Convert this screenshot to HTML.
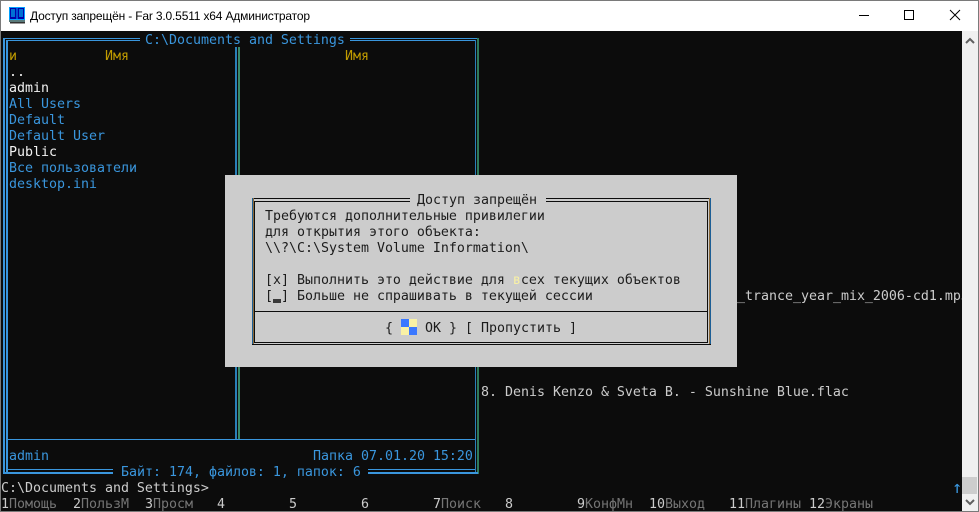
<!DOCTYPE html>
<html><head><meta charset="utf-8">
<style>
html,body{margin:0;padding:0;background:#0c0c0c}
#w{position:relative;width:979px;height:512px;overflow:hidden;background:#0c0c0c;font-family:"DejaVu Sans Mono","Liberation Mono",monospace;font-size:13.29px;line-height:16px}
.t{position:absolute;white-space:pre;height:16px;margin-top:2px}
.r{position:absolute}
.b{color:#3a96dd}.w{color:#f2f2f2}.y{color:#c19c00}.g{color:#cccccc}.d{color:#767676}
.k{color:#1c1c1c}
</style></head><body><div id="w">
<!-- panel frames -->
<div class="r" style="left:3px;top:38px;width:137px;height:1px;background:#3a96dd"></div>
<div class="r" style="left:6px;top:40px;width:134px;height:1px;background:#3a96dd"></div>
<div class="r" style="left:350px;top:38px;width:127px;height:1px;background:#3a96dd"></div>
<div class="r" style="left:350px;top:40px;width:125px;height:1px;background:#3a96dd"></div>
<div class="r" style="left:3px;top:38px;width:2px;height:436px;background:#3a96dd"></div>
<div class="r" style="left:6px;top:40px;width:2px;height:432px;background:#3a96dd"></div>
<div class="r" style="left:235px;top:47px;width:2px;height:392px;background:#2a7fb8"></div>
<div class="r" style="left:238px;top:47px;width:2px;height:392px;background:#3a8a6a"></div>
<div class="r" style="left:475px;top:40px;width:1px;height:432px;background:#2a7fb8"></div>
<div class="r" style="left:477px;top:38px;width:2px;height:436px;background:#2f7a5a"></div>
<div class="r" style="left:6px;top:439px;width:469px;height:1px;background:#3a96dd"></div>
<div class="r" style="left:3px;top:472px;width:110px;height:2px;background:#3a96dd"></div>
<div class="r" style="left:368px;top:469px;width:107px;height:1px;background:#3a96dd"></div>
<div class="r" style="left:368px;top:472px;width:110px;height:2px;background:#3a96dd"></div>
<div class="r" style="left:6px;top:469px;width:107px;height:1px;background:#3a96dd"></div>
<!-- panel text -->
<div class="t b" style="left:145px;top:31px">C:\Documents and Settings</div>
<div class="t y" style="left:9px;top:47px">и</div>
<div class="t y" style="left:105px;top:47px">Имя</div>
<div class="t y" style="left:345px;top:47px">Имя</div>
<div class="t w" style="left:9px;top:63px">..</div>
<div class="t w" style="left:9px;top:79px">admin</div>
<div class="t b" style="left:9px;top:95px">All Users</div>
<div class="t b" style="left:9px;top:111px">Default</div>
<div class="t b" style="left:9px;top:127px">Default User</div>
<div class="t w" style="left:9px;top:143px">Public</div>
<div class="t b" style="left:9px;top:159px">Все пользователи</div>
<div class="t b" style="left:9px;top:175px">desktop.ini</div>
<div class="t" style="left:737px;top:287px;color:#cccccc">_trance_year_mix_2006-cd1.mp3</div>
<div class="t" style="left:481px;top:383px;color:#cccccc">8. Denis Kenzo &amp; Sveta B. - Sunshine Blue.flac</div>
<div class="t b" style="left:9px;top:447px">admin</div>
<div class="t b" style="left:313px;top:447px">Папка 07.01.20 15:20</div>
<div class="t b" style="left:121px;top:463px">Байт: 174, файлов: 1, папок: 6</div>
<div class="t g" style="left:1px;top:479px">C:\Documents and Settings&gt;</div>
<div class="t b" style="left:952px;top:478px;font-size:17px">↑</div>
<!-- key bar -->
<div class="t g" style="left:1px;top:495px">1<span class="d">Помощь</span></div>
<div class="t g" style="left:73px;top:495px">2<span class="d">ПользМ</span></div>
<div class="t g" style="left:145px;top:495px">3<span class="d">Просм</span></div>
<div class="t g" style="left:217px;top:495px">4</div>
<div class="t g" style="left:289px;top:495px">5</div>
<div class="t g" style="left:361px;top:495px">6</div>
<div class="t g" style="left:433px;top:495px">7<span class="d">Поиск</span></div>
<div class="t g" style="left:505px;top:495px">8</div>
<div class="t g" style="left:577px;top:495px">9<span class="d">КонфМн</span></div>
<div class="t g" style="left:649px;top:495px">10<span class="d">Выход</span></div>
<div class="t g" style="left:729px;top:495px">11<span class="d">Плагины</span></div>
<div class="t g" style="left:809px;top:495px">12<span class="d">Экраны</span></div>
<!-- title bar -->
<div class="r" style="left:0;top:0;width:979px;height:31px;background:#fff"></div>
<!-- scrollbar -->
<div class="r" style="left:962px;top:31px;width:16px;height:480px;background:#f0f0f0"></div>
<div class="r" style="left:962px;top:477px;width:15px;height:17px;background:#cdcdcd"></div>
<svg class="r" style="left:962px;top:31px" width="16" height="480" viewBox="0 0 16 480" fill="none" stroke="#606060" stroke-width="2">
<path d="M4 12l4-4 4 4"/><path d="M4 469l4 4 4-4"/>
</svg>
<div class="r" style="left:0;top:0;width:979px;height:1px;background:#7a7a7a"></div>
<div class="r" style="left:0;top:0;width:1px;height:512px;background:#7a7a7a"></div>
<div class="r" style="left:978px;top:0;width:1px;height:512px;background:#7a7a7a"></div>
<div class="r" style="left:0;top:511px;width:979px;height:1px;background:#7a7a7a"></div>
<svg class="r" style="left:9px;top:7px" width="17" height="17" viewBox="0 0 17 17">
<rect x="0" y="0" width="16" height="13" fill="#00a0ff"/><rect x="1" y="1" width="6.5" height="11" fill="#0000a8"/><rect x="8.5" y="1" width="6.5" height="11" fill="#0000a8"/>
<path d="M2 3h4M2 5h4M2 7h4M2 9h4M10 3h4M10 5h4M10 7h4M10 9h4" stroke="#00e0ff" stroke-width="1"/>
<rect x="0" y="13" width="16" height="2" fill="#5a7a7a"/><rect x="1" y="15" width="15" height="1.5" fill="#333"/>
</svg>
<div class="r" style="left:30px;top:8px;font:12px/16px 'Liberation Sans',sans-serif;color:#000;white-space:pre;letter-spacing:-.17px">Доступ запрещён - Far 3.0.5511 x64 Администратор</div>
<svg class="r" style="left:850px;top:0" width="129" height="30" viewBox="0 0 129 30" fill="none" stroke="#000" stroke-width="1">
<path d="M9 15.5h10"/><rect x="54.500" y="10.500" width="9" height="9"/><path d="M100 10l10 10M110 10l-10 10"/>
</svg>
<!-- dialog -->
<div class="r" style="left:225px;top:175px;width:512px;height:192px;background:#cccccc"></div>
<div class="r" style="left:252px;top:198px;width:158px;height:1px;background:#0c0c0c"></div>
<div class="r" style="left:252px;top:201px;width:158px;height:1px;background:#0c0c0c"></div>
<div class="r" style="left:546px;top:198px;width:165px;height:1px;background:#0c0c0c"></div>
<div class="r" style="left:546px;top:201px;width:162px;height:1px;background:#0c0c0c"></div>
<div class="r" style="left:252px;top:198px;width:1px;height:147px;background:#1d5f96"></div>
<div class="r" style="left:253px;top:198px;width:1px;height:147px;background:#8a6a3a"></div>
<div class="r" style="left:254px;top:201px;width:1px;height:141px;background:#0c0c0c"></div>
<div class="r" style="left:707px;top:201px;width:1px;height:141px;background:#0c0c0c"></div>
<div class="r" style="left:709px;top:198px;width:1px;height:147px;background:#8a6a3a"></div>
<div class="r" style="left:710px;top:198px;width:1px;height:147px;background:#1d5f96"></div>
<div class="r" style="left:254px;top:311px;width:454px;height:1px;background:#0c0c0c"></div>
<div class="r" style="left:254px;top:342px;width:454px;height:1px;background:#0c0c0c"></div>
<div class="r" style="left:252px;top:344px;width:459px;height:1px;background:#0c0c0c"></div>
<div class="t k" style="left:417px;top:191px">Доступ запрещён</div>
<div class="t k" style="left:265px;top:207px">Требуются дополнительные привилегии</div>
<div class="t k" style="left:265px;top:223px">для открытия этого объекта:</div>
<div class="t k" style="left:265px;top:239px">\\?\C:\System Volume Information\</div>
<div class="t k" style="left:265px;top:271px">[x] Выполнить это действие для <span style="color:#f9f1a5">в</span>сех текущих объектов</div>
<div class="t k" style="left:265px;top:287px">[ ] Больше не спрашивать в текущей сессии</div>
<div class="r" style="left:273px;top:299px;width:8px;height:4px;background:#3a3a3a"></div>
<div class="t k" style="left:385px;top:319px">{</div>
<div class="r" style="left:401px;top:319px;width:8px;height:8px;background:#3b78ff"></div>
<div class="r" style="left:409px;top:319px;width:8px;height:8px;background:#f9f1a5"></div>
<div class="r" style="left:401px;top:327px;width:8px;height:8px;background:#f9f1a5"></div>
<div class="r" style="left:409px;top:327px;width:8px;height:8px;background:#3b78ff"></div>
<div class="t k" style="left:425px;top:319px">OK</div>
<div class="t k" style="left:449px;top:319px">}</div>
<div class="t k" style="left:465px;top:319px">[ Пропустить ]</div>
</div></body></html>
